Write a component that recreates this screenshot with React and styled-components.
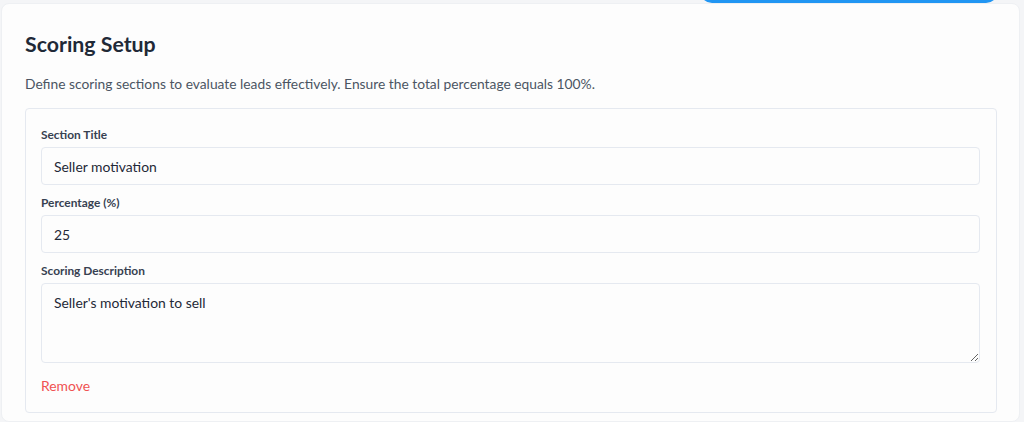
import React, { useState } from 'react';
import styled, { createGlobalStyle } from 'styled-components';

const GlobalStyle = createGlobalStyle`
  html, body {
    margin: 0;
    padding: 0;
    background: #f4f5f7;
    font-family: Lato, "Liberation Sans", sans-serif;
  }
  * { box-sizing: border-box; }
`;

const Page = styled.div`
  position: relative;
  width: 1024px;
  height: 422px;
  overflow: hidden;
  padding: 3px 4px 0 1px;
`;

const TopButton = styled.button`
  position: absolute;
  top: -30px;
  left: 700px;
  width: 298px;
  height: 33px;
  border: none;
  border-radius: 12px;
  background: #2196f3;
  z-index: 2;
`;

const Card = styled.section`
  background: #fdfdfd;
  border: 1px solid #eef0f3;
  border-radius: 8px;
  padding: 26px 22px 30px 23px;
  height: 100%;
`;

const Title = styled.h2`
  margin: 0;
  font-size: 21.3px;
  line-height: 28px;
  font-weight: 700;
  color: #1f2937;
`;

const Intro = styled.p`
  margin: 17px 0 15px;
  font-size: 13.8px;
  line-height: 18px;
  color: #4b5563;
`;

const SectionBox = styled.div`
  border: 1px solid #e5e9f0;
  border-radius: 4px;
  padding: 19px 16px 17px 15px;
  display: flex;
  flex-direction: column;
`;

const Field = styled.div`
  display: flex;
  flex-direction: column;
  gap: 5px;
  margin-bottom: 11px;
`;

const Label = styled.label`
  font-size: 11.9px;
  line-height: 14px;
  font-weight: 700;
  color: #374151;
`;

const Input = styled.input`
  height: 38px;
  padding: 0 12px;
  border: 1px solid #e5e9f0;
  border-radius: 4px;
  background: #fdfdfd;
  font-family: inherit;
  font-size: 13.9px;
  color: #1f2937;
  outline: none;
`;

const TextArea = styled.textarea`
  height: 80px;
  padding: 10px 12px;
  border: 1px solid #e5e9f0;
  border-radius: 4px;
  background: #fdfdfd;
  font-family: inherit;
  font-size: 13.9px;
  color: #1f2937;
  resize: vertical;
  outline: none;
`;

const RemoveButton = styled.button`
  align-self: flex-start;
  border: none;
  background: none;
  padding: 0;
  margin-top: 3px;
  font-family: inherit;
  font-size: 13.9px;
  line-height: 18px;
  color: #f05252;
  cursor: pointer;
`;

export default function App() {
  const [section, setSection] = useState({
    title: 'Seller motivation',
    percentage: '25',
    description: "Seller's motivation to sell",
  });

  const update = (key) => (e) => setSection({ ...section, [key]: e.target.value });

  return (
    <Page>
      <GlobalStyle />
      <TopButton aria-label="Save" />
      <Card>
        <Title>Scoring Setup</Title>
        <Intro>
          Define scoring sections to evaluate leads effectively. Ensure the total percentage equals 100%.
        </Intro>
        <SectionBox>
          <Field>
            <Label>Section Title</Label>
            <Input value={section.title} onChange={update('title')} />
          </Field>
          <Field>
            <Label>Percentage (%)</Label>
            <Input type="text" value={section.percentage} onChange={update('percentage')} />
          </Field>
          <Field>
            <Label>Scoring Description</Label>
            <TextArea value={section.description} onChange={update('description')} />
          </Field>
          <RemoveButton>Remove</RemoveButton>
        </SectionBox>
      </Card>
    </Page>
  );
}
